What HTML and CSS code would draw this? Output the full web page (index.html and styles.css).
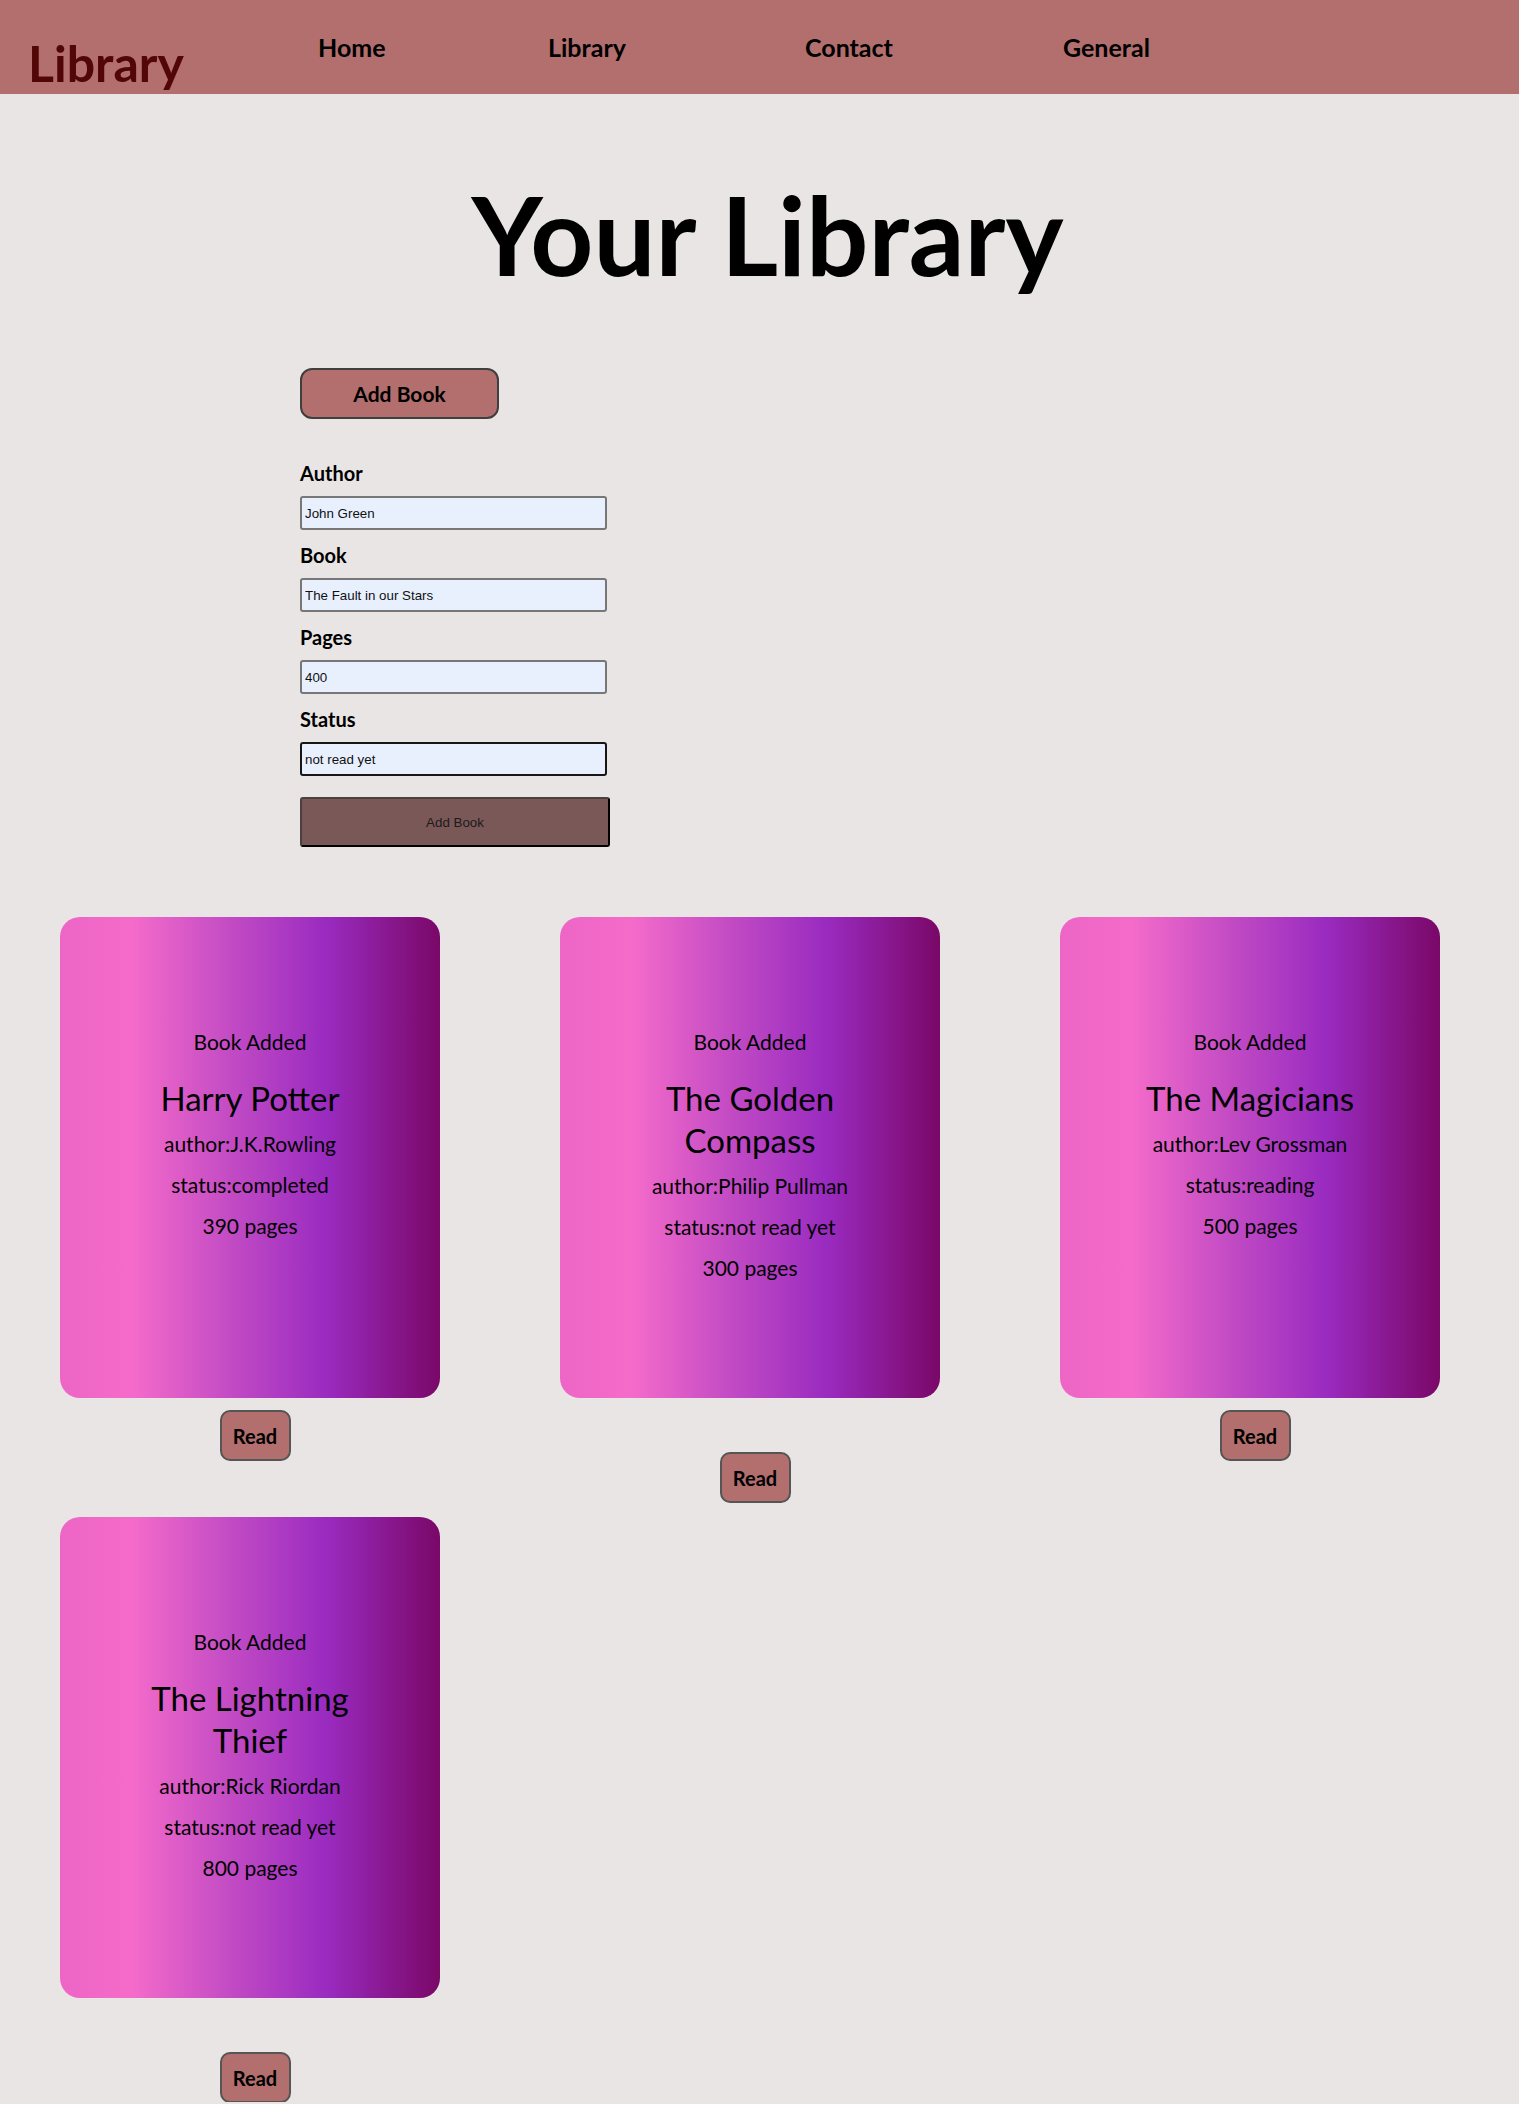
FILE: index.html
```html
<!DOCTYPE html>
<html lang="en">
<head>
<meta charset="utf-8">
<title>Library</title>
<link rel="stylesheet" href="styles.css">
</head>
<body>
<header class="topbar">
  <div class="logo">Library</div>
  <nav class="menu">
    <a href="#">Home</a>
    <a href="#">Library</a>
    <a href="#">Contact</a>
    <a href="#">General</a>
  </nav>
</header>

<main>
  <h1 class="page-title">Your Library</h1>

  <section class="add-section">
    <button class="toggle-btn" type="button">Add Book</button>
    <form class="book-form">
      <label class="field-label" for="author">Author</label>
      <input class="field" id="author" type="text" value="John Green">
      <label class="field-label" for="book">Book</label>
      <input class="field" id="book" type="text" value="The Fault in our Stars">
      <label class="field-label" for="pages">Pages</label>
      <input class="field" id="pages" type="text" value="400">
      <label class="field-label" for="status">Status</label>
      <input class="field field-focus" id="status" type="text" value="not read yet">
      <button class="submit-btn" type="button">Add Book</button>
    </form>
  </section>

  <section class="shelf">
    <article class="card">
      <p class="added">Book Added</p>
      <h2 class="book-title">Harry Potter</h2>
      <p class="detail">author:J.K.Rowling</p>
      <p class="detail">status:completed</p>
      <p class="detail">390 pages</p>
      <div class="card-actions"><button class="read-btn" type="button">Read</button></div>
    </article>
    <article class="card">
      <p class="added">Book Added</p>
      <h2 class="book-title">The Golden Compass</h2>
      <p class="detail">author:Philip Pullman</p>
      <p class="detail">status:not read yet</p>
      <p class="detail">300 pages</p>
      <div class="card-actions"><button class="read-btn" type="button">Read</button></div>
    </article>
    <article class="card">
      <p class="added">Book Added</p>
      <h2 class="book-title">The Magicians</h2>
      <p class="detail">author:Lev Grossman</p>
      <p class="detail">status:reading</p>
      <p class="detail">500 pages</p>
      <div class="card-actions"><button class="read-btn" type="button">Read</button></div>
    </article>
    <article class="card">
      <p class="added">Book Added</p>
      <h2 class="book-title">The Lightning Thief</h2>
      <p class="detail">author:Rick Riordan</p>
      <p class="detail">status:not read yet</p>
      <p class="detail">800 pages</p>
      <div class="card-actions"><button class="read-btn" type="button">Read</button></div>
    </article>
  </section>
</main>
</body>
</html>
```

FILE: styles.css
```css
* { box-sizing: border-box; }

body {
  margin: 0;
  background: #e9e5e4;
  font-family: "Comic Sans MS", Lato, sans-serif;
  color: #000;
}

.topbar {
  display: flex;
  align-items: flex-start;
  height: 94px;
  background: #b36e6e;
}

.logo {
  width: 318px;
  padding: 33px 0 0 28px;
  font-size: 50px;
  font-weight: 700;
  line-height: 1.2;
  color: #520606;
}

.menu {
  display: grid;
  grid-template-columns: 230px 257px 258px auto;
  padding-top: 32px;
}

.menu a {
  font-size: 25px;
  font-weight: 700;
  line-height: 1.2;
  color: #000;
  text-decoration: none;
}

.page-title {
  margin: 73px 0 69px;
  padding-left: 16px;
  text-align: center;
  font-size: 110px;
  font-weight: 700;
  line-height: 1.2;
}

.add-section {
  padding-left: 300px;
}

.toggle-btn {
  display: block;
  width: 199px;
  height: 51px;
  background: #b36e6e;
  border: 2px solid #3f3f3f;
  border-radius: 12px;
  font-family: inherit;
  font-size: 21px;
  font-weight: 700;
  color: #000;
}

.book-form {
  display: flex;
  flex-direction: column;
  align-items: flex-start;
  padding-top: 29px;
}

.field-label {
  display: block;
  margin: 13px 0 11px;
  font-size: 20px;
  font-weight: 700;
  line-height: 24px;
}

.field {
  width: 307px;
  height: 34px;
  padding: 1px 3px;
  background: #e8f0fe;
  border: 2px solid #777;
  border-radius: 3px;
  font-family: "Liberation Sans", Arial, sans-serif;
  font-size: 13.33px;
  color: #111;
}

.field-focus {
  border-color: #161616;
}

.submit-btn {
  width: 310px;
  height: 50px;
  margin-top: 21px;
  background: #7b5858;
  border: 2px outset #4a4040;
  border-radius: 3px;
  font-family: "Liberation Sans", Arial, sans-serif;
  font-size: 13.33px;
  color: #1a1a1a;
}

.shelf {
  display: grid;
  grid-template-columns: repeat(3, 380px);
  column-gap: 120px;
  row-gap: 119px;
  padding: 0 0 104px 60px;
  margin-top: 70px;
}

.card {
  height: 481px;
  padding: 111px 70px 0;
  border-radius: 20px;
  background: linear-gradient(to right, #ee66c5 0%, #f46bca 19%, #c24bc4 45%, #9a2bc0 70%, #7a0868 100%);
  text-align: center;
}

.added {
  margin: 0;
  font-size: 21px;
  line-height: 28px;
}

.book-title {
  margin: 21px 0 4px;
  font-size: 33px;
  font-weight: 400;
  line-height: 42px;
}

.detail {
  margin: 0;
  font-size: 21px;
  line-height: 41px;
}

.card-actions {
  margin-top: 164px;
  padding-left: 10px;
}

.read-btn {
  display: block;
  margin: 0 auto;
  width: 71px;
  height: 51px;
  background: #b36e6e;
  border: 2px solid #555;
  border-radius: 10px;
  font-family: inherit;
  font-size: 20px;
  font-weight: 700;
  color: #000;
}
```
